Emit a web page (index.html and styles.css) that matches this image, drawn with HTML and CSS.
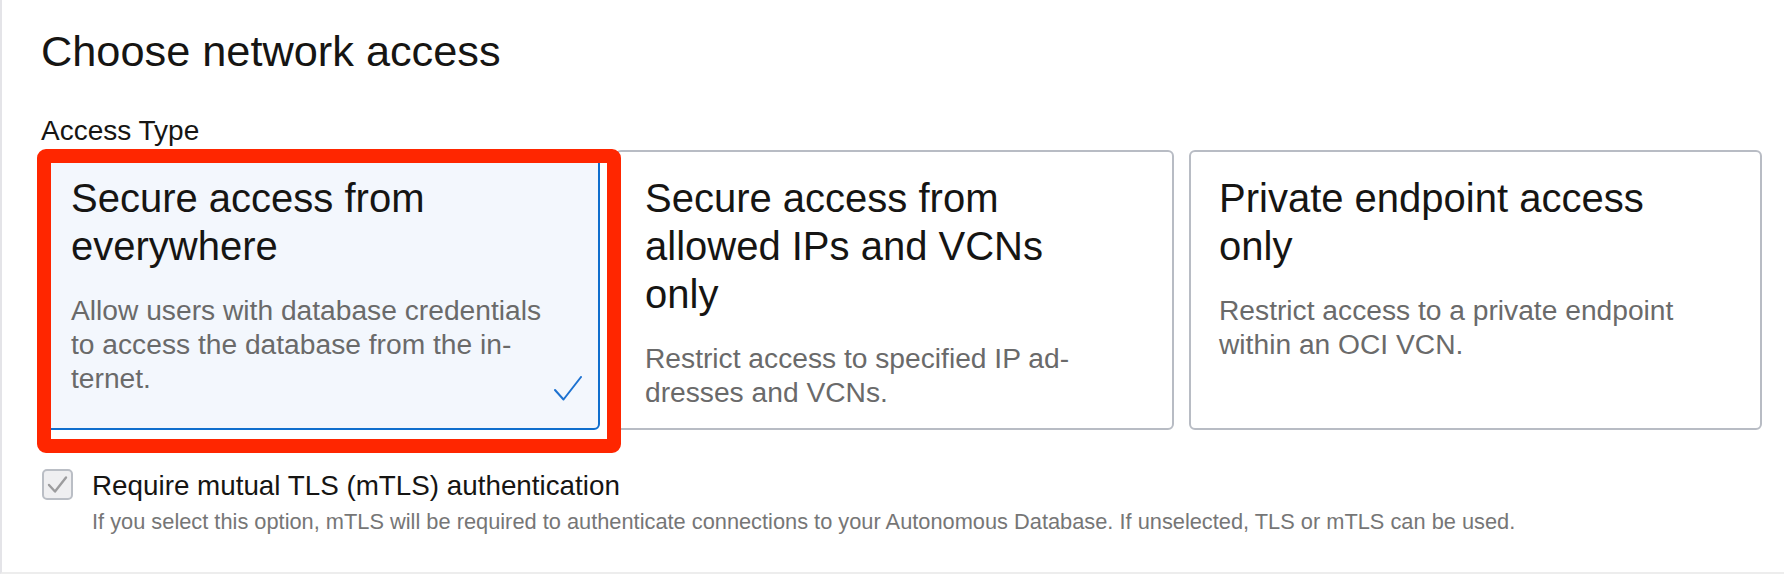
FILE: index.html
```html
<!DOCTYPE html>
<html lang="en">
<head>
<meta charset="utf-8">
<title>Choose network access</title>
<link rel="stylesheet" href="styles.css">
</head>
<body>
<div class="panel">
  <h1 class="title">Choose network access</h1>
  <div class="field-label">Access Type</div>
  <div class="cards">
    <div class="card card--selected">
      <div class="card-title">Secure access from everywhere</div>
      <div class="card-desc">Allow users with database credentials to access the database from the in&shy;ternet.</div>
      <svg class="card-check" viewBox="0 0 28 25" aria-hidden="true"><path d="M1 14 L9.5 23.5 L27 1" fill="none" stroke="#1d72d1" stroke-width="2" stroke-linecap="round" stroke-linejoin="round"/></svg>
    </div>
    <div class="card">
      <div class="card-title">Secure access from allowed IPs and VCNs only</div>
      <div class="card-desc">Restrict access to specified IP ad&shy;dresses and VCNs.</div>
    </div>
    <div class="card">
      <div class="card-title">Private endpoint access only</div>
      <div class="card-desc">Restrict access to a private endpoint within an OCI VCN.</div>
    </div>
    <div class="annotation"></div>
  </div>
  <div class="mtls">
    <span class="checkbox"><svg viewBox="0 0 27 27" aria-hidden="true"><path d="M5 14 L11 20.5 L22 6.5" fill="none" stroke="#9c9c9e" stroke-width="2.4" stroke-linecap="round" stroke-linejoin="round"/></svg></span>
    <div class="mtls-text">
      <div class="mtls-label">Require mutual TLS (mTLS) authentication</div>
      <div class="mtls-help">If you select this option, mTLS will be required to authenticate connections to your Autonomous Database. If unselected, TLS or mTLS can be used.</div>
    </div>
  </div>
</div>
</body>
</html>
```

FILE: styles.css
```css
* { box-sizing: border-box; }

body {
  margin: 0;
  background: #ffffff;
  font-family: "Liberation Sans", Arial, Helvetica, sans-serif;
  color: #161513;
}

.panel {
  height: 574px;
  border-left: 2px solid #e4e4e8;
  border-bottom: 2px solid #ededed;
  padding: 25px 0 0 39px;
}

.title {
  margin: 0;
  font-size: 43.3px;
  line-height: 52px;
  font-weight: 400;
}

.field-label {
  margin-top: 38px;
  font-size: 28px;
  line-height: 32px;
}

.cards {
  position: relative;
  display: grid;
  grid-template-columns: 559px 559px 573px;
  column-gap: 15px;
  margin-top: 3px;
}

.card {
  position: relative;
  height: 280px;
  border: 2px solid #b8bcc4;
  border-radius: 6px;
  padding: 22px 51px 0 28px;
  background: #ffffff;
}

.card--selected {
  background: #f3f7fd;
  border-color: #0f6ecd;
}

.card-title {
  font-size: 40px;
  line-height: 48px;
}

.card-desc {
  margin-top: 23px;
  font-size: 28.2px;
  line-height: 34px;
  color: #6a6a6a;
}

.card-check {
  position: absolute;
  right: 16px;
  bottom: 27px;
  width: 28px;
  height: 25px;
}

.annotation {
  position: absolute;
  left: -4px;
  top: -1px;
  width: 584px;
  height: 304px;
  border: 14px solid #ff2600;
  border-radius: 9px;
  pointer-events: none;
}

.mtls {
  display: flex;
  align-items: flex-start;
  margin-top: 39px;
  margin-left: 1px;
}

.checkbox {
  flex: none;
  width: 31px;
  height: 31px;
  border: 2px solid #babec5;
  border-radius: 5px;
  background: #efeff1;
  display: flex;
  align-items: center;
  justify-content: center;
}

.checkbox svg {
  width: 27px;
  height: 27px;
}

.mtls-text {
  margin-left: 19px;
  margin-top: 1px;
}

.mtls-label {
  font-size: 27.8px;
  line-height: 32px;
}

.mtls-help {
  margin-top: 7px;
  font-size: 21.8px;
  line-height: 26px;
  color: #767676;
}
```
